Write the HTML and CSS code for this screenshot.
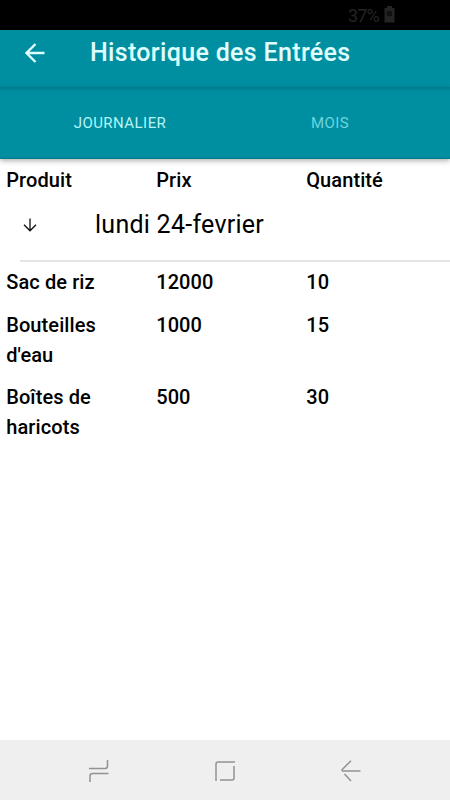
FILE: index.html
```html
<!doctype html>
<html lang="fr">

<head>
    <meta charset="UTF-8">
    <meta name="viewport" content="width=device-width, initial-scale=1">
    <link rel="stylesheet" href="styles.css">
    <title>Historique des Entrées</title>
</head>

<body>
    <div class="status">
        <span class="percent">37%</span>
        <svg class="battery" width="11" height="17" viewBox="0 0 11 17">
            <path d="M3 0h5v2h2.500v14.500H.5V2H3z" fill="#242424"/>
            <path d="M3 5h5v5H3z" fill="#111"/>
        </svg>
    </div>
    <header class="toolbar">
        <svg class="back" width="20" height="20" viewBox="0 0 20 20">
            <path d="M19.500 10H1.500M10.500 1L1.500 10l9 9" fill="none" stroke="#e0ffff" stroke-width="2.300"/>
        </svg>
        <h1>Historique des Entrées</h1>
    </header>
    <nav class="tabs">
        <a class="tab active">JOURNALIER</a>
        <a class="tab">MOIS</a>
    </nav>
    <main>
        <div class="row">
            <div>Produit</div>
            <div>Prix</div>
            <div>Quantité</div>
        </div>
        <div class="day">
            <svg class="arrow" width="14" height="14" viewBox="0 0 14 14">
                <path d="M7 .5v12M1 6.800l6 6 6-6" fill="none" stroke="#111" stroke-width="1.300"/>
            </svg>
            <h2>lundi 24-fevrier</h2>
        </div>
        <div class="row">
            <div>Sac de riz</div>
            <div>12000</div>
            <div>10</div>
        </div>
        <div class="row">
            <div>Bouteilles d'eau</div>
            <div>1000</div>
            <div>15</div>
        </div>
        <div class="row">
            <div>Boîtes de haricots</div>
            <div>500</div>
            <div>30</div>
        </div>
    </main>
    <footer class="navbar">
        <svg width="20" height="22" viewBox="0 0 20 22">
            <path d="M0 8.500h16q2.500 0 2.500-2.500V0M19.500 13.500H3.500q-2.500 0-2.500 2.500v6"/>
        </svg>
        <svg width="20" height="20" viewBox="0 0 20 20">
            <path d="M20 1H3Q1 1 1 3v17M5 19h12q2 0 2-2V5"/>
        </svg>
        <svg width="20" height="22" viewBox="0 0 20 22">
            <path d="M19.500 11H1.500q-1-.7 0-1.700L10 .7M3.500 14l6.500 7"/>
        </svg>
    </footer>
</body>

</html>
```

FILE: styles.css
```css
* {
    box-sizing: border-box;
}

body {
    margin: 0;
    height: 800px;
    display: flex;
    flex-direction: column;
    overflow: hidden;
    background: #fff;
    color: #000;
    font-family: Roboto, sans-serif;
}

h1,
h2 {
    margin: 0;
}

.status {
    height: 30px;
    background: #000;
    color: #242424;
    display: flex;
    padding: 6px 55px 0 0;
    justify-content: flex-end;
    gap: 5px;
}

.percent {
    font-size: 18px;
    line-height: 20px;
    letter-spacing: -0.8px;
}

.toolbar {
    height: 57px;
    padding: 0 25px 12px;
    display: flex;
    align-items: center;
    background: #008fa1;
}

.toolbar h1 {
    margin-left: 45px;
    font-size: 25px;
    font-weight: 500;
    line-height: 30px;
    letter-spacing: 0.33px;
    color: #e0ffff;
}

.tabs {
    height: 72px;
    padding-bottom: 1px;
    display: flex;
    align-items: center;
    background: linear-gradient(#007c8c, #008fa1 5px, #008fa1 70px, #007989);
    box-shadow: 0 2px 5px rgba(0, 0, 0, 0.3);
}

.tab {
    width: 180px;
    margin-left: 30px;
    text-align: center;
    font-size: 15px;
    letter-spacing: 0.45px;
    color: #6dd5df;
}

.tab.active {
    color: #b5f5f7;
}

main {
    flex: 1;
}

.row {
    display: grid;
    grid-template-columns: repeat(3, 150px);
    font-size: 20px;
    font-weight: 500;
    line-height: 30px;
    letter-spacing: 0.1px;
}

.row div {
    padding: 6px 20px 6.400px 6.200px;
}

.day {
    height: 61px;
    margin-left: 20px;
    padding: 0 0 11px 3px;
    display: flex;
    align-items: center;
    border-bottom: 2px solid #e4e4e4;
}

.day h2 {
    margin-left: 58px;
    font-size: 25px;
    font-weight: 400;
    line-height: 30px;
    letter-spacing: 0.26px;
}

.day + .row {
    margin-top: -1px;
}

.navbar {
    height: 60px;
    padding-top: 1px;
    display: flex;
    align-items: center;
    justify-content: center;
    gap: 106px;
    background: #efefef;
}

.navbar path {
    fill: none;
    stroke: #929292;
    stroke-width: 1.500;
}
```
